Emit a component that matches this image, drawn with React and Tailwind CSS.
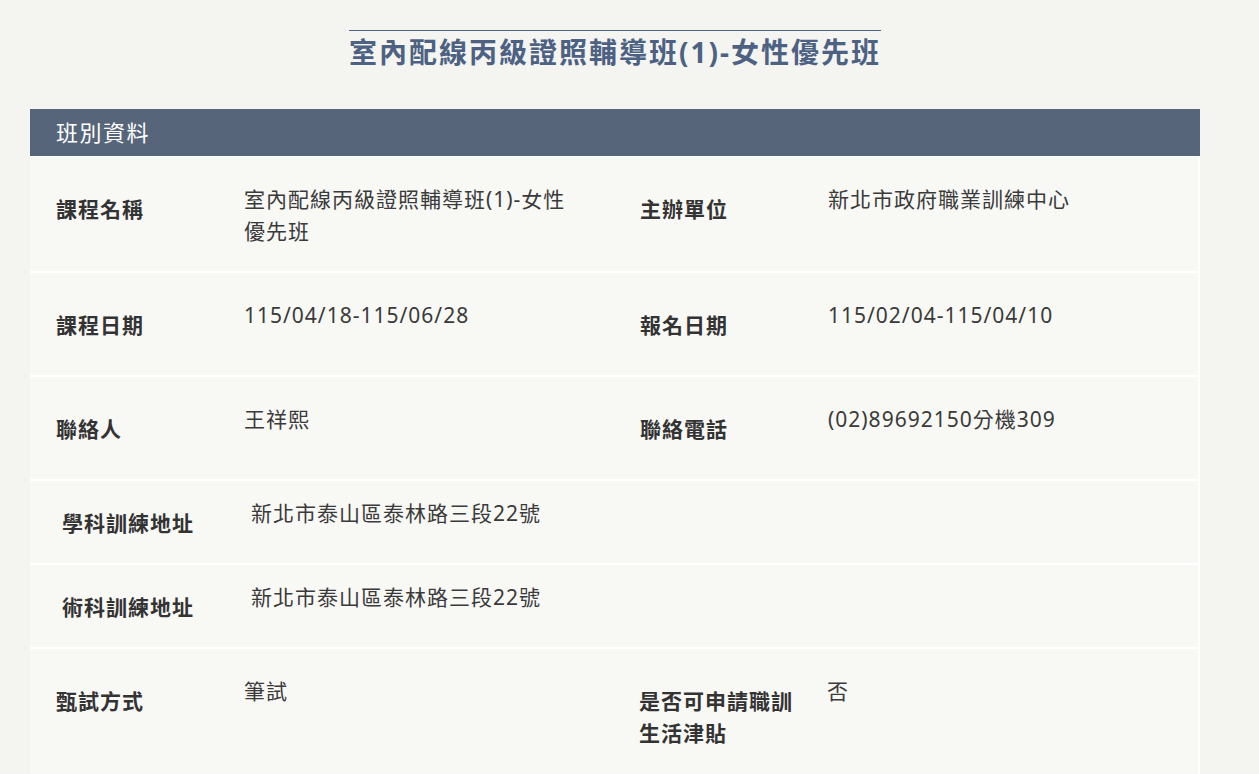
const font = "font-['Noto_Sans','Noto_Sans_CJK_TC',sans-serif]"

function Pair({ label, value }) {
  return (
    <div className="flex w-[585px]">
      <div className="w-[214px] shrink-0 pl-[26px] pt-[36px] pb-[34px] text-[21px] leading-[32px] font-bold tracking-[1px] text-[#333]">
        {label}
      </div>
      <div className="w-[336px] pt-[26px] pb-[24px] text-[21px] leading-[32px] tracking-[1px] text-[#3a3a3a]">
        {value}
      </div>
    </div>
  )
}

function Row({ children }) {
  return <div className="flex bg-[#f8f8f5] border-r-2 border-white">{children}</div>
}

function WideRow({ label, value }) {
  return (
    <Row>
      <div className="w-[221px] shrink-0 pl-[32px] pt-[26px] pb-[24px] text-[21px] leading-[32px] font-bold tracking-[1px] text-[#333]">
        {label}
      </div>
      <div className="pt-[16px] text-[21px] leading-[32px] tracking-[1px] text-[#3a3a3a]">
        {value}
      </div>
    </Row>
  )
}

export default function App() {
  return (
    <div className={"min-h-screen bg-[#f4f4f1] " + font}>
      <div className="ml-[30px] w-[1170px] pt-[30px]">
        <div className="flex justify-center">
          <h1 className="border-t border-[#4d6283] text-[#4d6283] text-[28px] leading-[42px] font-bold tracking-[2px]">
            室內配線丙級證照輔導班(1)-女性優先班
          </h1>
        </div>

        <div className="mt-[36px] h-[47px] bg-[#56657a] pl-[26px] flex items-center text-white text-[22px] tracking-[1.5px]">
          班別資料
        </div>

        <div className="flex flex-col gap-[2px] bg-white pt-px">
          <Row>
            <Pair label="課程名稱" value="室內配線丙級證照輔導班(1)-女性優先班" />
            <Pair label="主辦單位" value="新北市政府職業訓練中心" />
          </Row>
          <Row>
            <Pair label="課程日期" value="115/04/18-115/06/28" />
            <Pair label="報名日期" value="115/02/04-115/04/10" />
          </Row>
          <Row>
            <Pair label="聯絡人" value="王祥熙" />
            <Pair label="聯絡電話" value="(02)89692150分機309" />
          </Row>
          <WideRow label="學科訓練地址" value="新北市泰山區泰林路三段22號" />
          <WideRow label="術科訓練地址" value="新北市泰山區泰林路三段22號" />
          <Row>
            <Pair label="甄試方式" value="筆試" />
            <div className="flex w-[585px]">
              <div className="w-[213px] shrink-0 pl-[25px] pt-[36px] pb-[34px] text-[21px] leading-[32px] font-bold tracking-[1px] text-[#333]">
                <span className="block w-[160px]">是否可申請職訓生活津貼</span>
              </div>
              <div className="pt-[26px] pb-[24px] text-[21px] leading-[32px] tracking-[1px] text-[#3a3a3a]">
                否
              </div>
            </div>
          </Row>
        </div>
      </div>
    </div>
  )
}
